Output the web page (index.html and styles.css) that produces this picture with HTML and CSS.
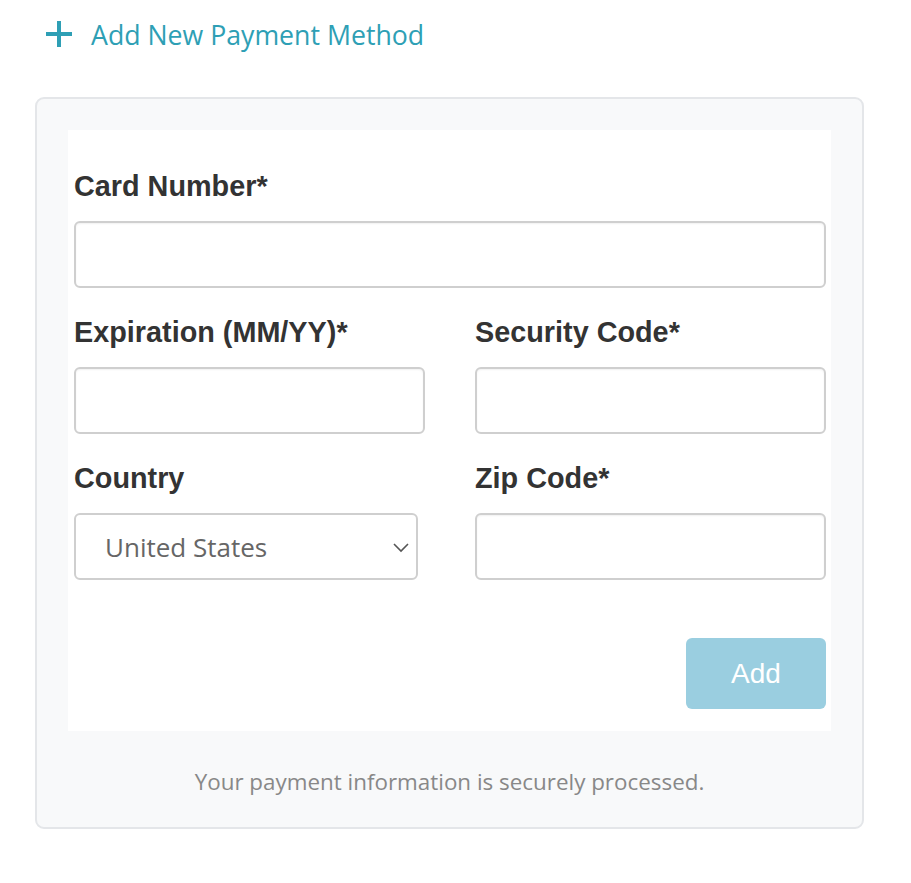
FILE: index.html
```html
<!DOCTYPE html>
<html>
<head>
<meta charset="utf-8">
<link rel="stylesheet" href="styles.css">
</head>
<body>
<div class="page">
  <div class="add-link">
    <svg class="plus" width="30" height="30" viewBox="0 0 30 30"><path d="M15 2v26M2 15h26" stroke="#2e9fb5" stroke-width="4" fill="none"/></svg>
    <span>Add New Payment Method</span>
  </div>
  <div class="card">
    <form class="form">
      <div class="field">
        <label class="label">Card Number*</label>
        <input class="input" type="text">
      </div>
      <div class="row">
        <div class="field">
          <label class="label">Expiration (MM/YY)*</label>
          <input class="input" type="text">
        </div>
        <div class="field">
          <label class="label">Security Code*</label>
          <input class="input" type="text">
        </div>
      </div>
      <div class="row">
        <div class="field">
          <label class="label">Country</label>
          <div class="select">
            <span>United States</span>
            <svg class="chev" width="18" height="12" viewBox="0 0 18 12"><path d="M2 3l7 7 7-7" stroke="#555" stroke-width="1.6" fill="none"/></svg>
          </div>
        </div>
        <div class="field">
          <label class="label">Zip Code*</label>
          <input class="input" type="text">
        </div>
      </div>
      <div class="actions">
        <button class="btn" type="button">Add</button>
      </div>
    </form>
    <p class="note">Your payment information is securely processed.</p>
  </div>
</div>
</body>
</html>
```
FILE: styles.css
```css
html, body { margin: 0; padding: 0; background: #fff; }
.page { padding: 13px 0 0 35px; width: 829px; }
.add-link {
  display: flex; align-items: center; gap: 17px;
  padding-left: 9px; height: 42px;
  font-family: "Open Sans", "Noto Sans", sans-serif;
  font-size: 26.7px; color: #2e9fb5;
}
.plus { flex: none; }
.card {
  margin-top: 42px;
  background: #f8f9fa;
  border: 2px solid #e4e6e9;
  border-radius: 9px;
  padding: 31px 31px 30px;
}
.form {
  background: #fff;
  padding: 40px 5px 22px 6px;
  margin: 0;
}
.field { margin-bottom: 28px; }
.label {
  display: block;
  font-family: "Liberation Sans", Arial, sans-serif;
  font-weight: bold; font-size: 28.8px; line-height: 32px;
  color: #333; margin-bottom: 19px;
}
.input {
  display: block; box-sizing: border-box;
  width: 100%; height: 67px;
  border: 2px solid #cfcfcf; border-radius: 6px;
  box-shadow: inset 0 1px 2px rgba(0,0,0,0.06);
  margin: 0; padding: 0 12px; background: #fff;
}
.row { display: grid; grid-template-columns: 1fr 1fr; column-gap: 50px; }
.select {
  box-sizing: border-box; width: 344px; height: 67px;
  border: 2px solid #cfcfcf; border-radius: 6px;
  display: flex; align-items: center; justify-content: space-between;
  padding: 0 6px 0 29px;
  font-family: "Open Sans", "Noto Sans", sans-serif;
  font-size: 26px; color: #666;
}
.actions { display: flex; justify-content: flex-end; padding-top: 30px; }
.btn {
  width: 140px; height: 71px;
  background: #9acee0; border: none; border-radius: 6px;
  color: #fff; font-family: "Liberation Sans", Arial, sans-serif; font-size: 28px;
}
.note {
  margin: 36px 0 0; text-align: center;
  font-family: "Open Sans", "Noto Sans", sans-serif;
  font-size: 22.4px; line-height: 30px; color: #888;
}
```
